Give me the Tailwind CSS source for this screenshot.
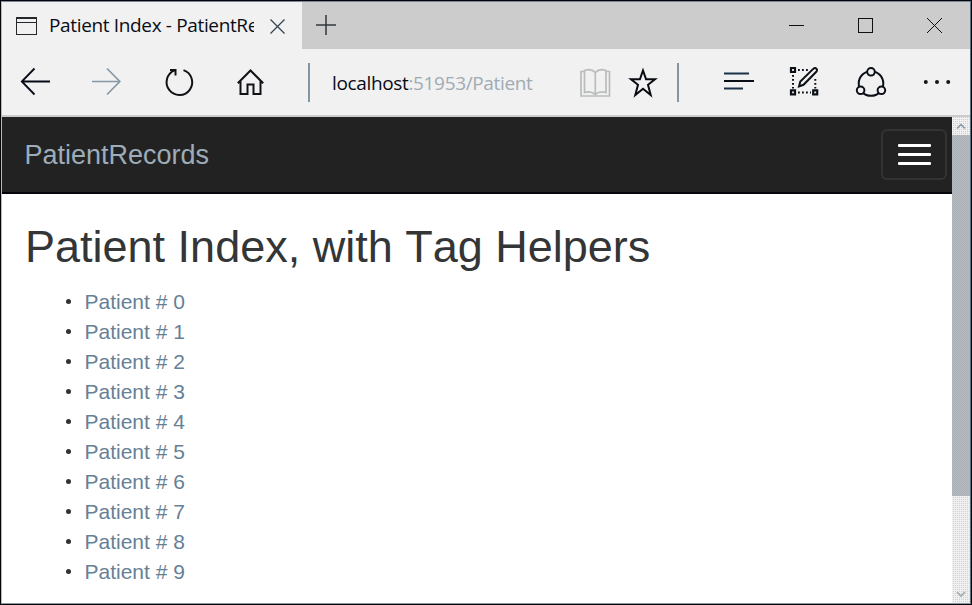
<!DOCTYPE html>
<html lang="en">
<head>
<meta charset="utf-8">
<title>Patient Index - PatientRecords</title>
<script src="https://cdn.jsdelivr.net/npm/@tailwindcss/browser@4"></script>
</head>
<body class="w-[972px] h-[605px] overflow-hidden bg-white font-['Liberation_Sans',Arial,sans-serif]">
<div class="h-[605px] w-[972px] border border-[#050508]">
<div class="flex h-[603px] w-[970px] flex-col border border-t-[#76889a] border-r-[#5b6c7d] border-b-[#8a97a2] border-l-[#b5bbc1]">
  <header class="flex h-[47px] shrink-0 bg-[#cccccc]">
    <div class="flex w-[300px] shrink-0 items-center bg-[#f1f1f1] pl-3.5">
      <svg class="h-[18px] w-[21px] shrink-0" viewBox="0 0 21 18" fill="none" stroke="#25282b" shape-rendering="crispEdges"><path d="M0 1H21" stroke-width="2"/><path d="M.5 0V17.5H20.5V0M0 5H21"/></svg>
      <div class="ml-3 w-[205px] overflow-hidden whitespace-nowrap pb-0.5 font-['Open_Sans',sans-serif] text-[19px] leading-7 tracking-[-0.35px] text-[#0a0d16]">Patient Index - PatientRecords</div>
      <svg class="ml-4 h-4 w-4 shrink-0" viewBox="0 0 16 16" fill="none" stroke="#34434f" stroke-width="1.3"><path d="M.5 1.5 14.5 15.5M14.5 1.5.5 15.5"/></svg>
    </div>
    <svg class="mt-[13px] ml-3.5 h-5 w-5" viewBox="0 0 20 20" fill="none" stroke="#33373a" stroke-width="1.5"><path d="M0 10H20M10 0V20"/></svg>
    <div class="mr-[27px] ml-auto flex items-center gap-[53px]">
      <svg class="h-4 w-4" viewBox="0 0 16 16" stroke="#101116" shape-rendering="crispEdges"><path d="M0 7.5H15"/></svg>
      <svg class="h-4 w-4" viewBox="0 0 16 16" fill="none" stroke="#101116" shape-rendering="crispEdges"><rect x=".5" y=".5" width="14" height="14"/></svg>
      <svg class="h-4 w-4" viewBox="0 0 16 16" stroke="#101116"><path d="M0 0 15 15M15 0 0 15"/></svg>
    </div>
  </header>

  <div class="flex h-[68px] shrink-0 items-center border-b-2 border-[#cbcbcb] bg-[#f1f1f1]">
    <svg class="ml-[18px] h-8 w-8 shrink-0" viewBox="20 66 32 32" fill="none" stroke="#070b18" stroke-width="1.8"><path d="M50 81.5H22M34.5 68.5 21.8 81.5 34.5 94.5"/></svg>
    <svg class="ml-10 h-8 w-8 shrink-0" viewBox="92 66 32 32" fill="none" stroke="#8799a6" stroke-width="1.7"><path d="M92 81.5H120M107 68.5 119.8 81.5 107 94.5"/></svg>
    <svg class="ml-10 h-8 w-8 shrink-0" viewBox="164 66 32 32" fill="none" stroke="#111216" stroke-width="2"><path d="M183.5 70.1A12.8 12.8 0 1 1 174.5 70.4M170 70H175.5V75.5"/></svg>
    <svg class="ml-10 h-8 w-8 shrink-0" viewBox="236 66 32 32" fill="none" stroke="#101218" stroke-width="2"><path d="M237.8 83.2 250.5 70.5 263.2 83.2M240.5 81V94H247.5V84.5H253.5V94H260.5V81"/></svg>
    <div class="ml-10 h-[39px] w-0.5 shrink-0 bg-[#8195a2]"></div>
    <div class="ml-[22px] w-[248px] shrink-0 whitespace-nowrap pt-0.5 font-['Open_Sans',sans-serif] text-[19px] leading-7 tracking-[-0.35px]"><span class="text-[#070b16]">localhost</span><span class="text-[#a0abb3]">:51953/Patient</span></div>
    <svg class="h-8 w-8 shrink-0" viewBox="580 66 32 32" fill="none" stroke="#b9bcbd" stroke-width="1.7"><path d="M584 71.5H581V96H609.5V71.5H606.5"/><path d="M595.3 72.5C592 69 588 69.3 584.5 70.5V92.5C588 91.5 592 91.5 595.3 94.5C598.5 91.5 603 91.5 606 92.5V70.5C602.5 69.3 598.5 69 595.3 72.5V94"/></svg>
    <svg class="ml-4 h-8 w-8 shrink-0" viewBox="628 66 32 32" fill="none" stroke="#080b12" stroke-width="2"><path d="M643 70.5 646.1 79.3H655L648 84.8 650.7 95 643 88.8 635.3 95 638 84.8 631 79.3H639.9Z"/></svg>
    <div class="ml-[17px] h-[39px] w-0.5 shrink-0 bg-[#8195a2]"></div>
    <svg class="ml-[45px] h-8 w-8 shrink-0" viewBox="724 66 32 32" fill="none" stroke="#080d18" stroke-width="2"><path d="M724 81H754"/><path d="M724 73.5H749M724 88.5H743" stroke="#193047"/></svg>
    <svg class="ml-8 h-8 w-8 shrink-0" viewBox="788 66 32 32" fill="none" stroke="#0c1017" stroke-width="2"><path d="M791 68H795V72H791ZM791 90.3H795V94.3H791ZM813.2 90.3H817.2V94.3H813.2Z" stroke-width="2.2"/><path d="M798 70H808M793 75V88.5M798 92.5H811M815.3 79V88.5" stroke-dasharray="1.8 2.2"/><path d="M799 86.5 800.3 81.5 813.2 68.9C815.6 66.8 818.4 69.5 816.3 71.7L803.5 84.8Z"/></svg>
    <svg class="ml-[35px] h-8 w-8 shrink-0" viewBox="855 66 32 32" fill="none" stroke="#0b0f16" stroke-width="2"><circle cx="871" cy="83.5" r="12.3"/><g fill="#f1f1f1"><circle cx="871" cy="71.8" r="3.8"/><circle cx="860.6" cy="90.3" r="3.8"/><circle cx="881.4" cy="90.3" r="3.8"/></g></svg>
    <svg class="ml-[35px] h-8 w-8 shrink-0" viewBox="922 66 32 32" fill="#12161b"><circle cx="925.8" cy="82" r="2"/><circle cx="937" cy="82" r="2"/><circle cx="948.2" cy="82" r="2"/></svg>
  </div>

  <div class="flex min-h-0 flex-1">
    <main class="min-w-0 flex-1 bg-white">
      <nav class="flex h-[77px] items-center justify-between border-b-2 border-[#05060c] bg-[#222222] pr-[5px] pl-[22.5px]">
        <a class="text-[27px] leading-[30px] text-[#9dacb8]">PatientRecords</a>
        <button class="flex h-[51px] w-[66px] flex-col items-center justify-center gap-1.5 rounded-md border-2 border-[#333333]">
          <span class="h-[3px] w-[33px] rounded-[1px] bg-white"></span><span class="h-[3px] w-[33px] rounded-[1px] bg-white"></span><span class="h-[3px] w-[33px] rounded-[1px] bg-white"></span>
        </button>
      </nav>
      <h2 class="mt-[28px] pl-[23px] text-[45px] leading-[50px] whitespace-nowrap text-[#333536] [font-kerning:none]">Patient Index, with Tag Helpers</h2>
      <ul class="mt-[15px] ml-[64px] text-[21px] leading-[30px] text-[#668096]">
        <li class="flex items-center gap-[13.5px]"><i class="mb-px h-[5px] w-[5px] rounded-full bg-[#303236]"></i><a>Patient # 0</a></li>
        <li class="flex items-center gap-[13.5px]"><i class="mb-px h-[5px] w-[5px] rounded-full bg-[#303236]"></i><a>Patient # 1</a></li>
        <li class="flex items-center gap-[13.5px]"><i class="mb-px h-[5px] w-[5px] rounded-full bg-[#303236]"></i><a>Patient # 2</a></li>
        <li class="flex items-center gap-[13.5px]"><i class="mb-px h-[5px] w-[5px] rounded-full bg-[#303236]"></i><a>Patient # 3</a></li>
        <li class="flex items-center gap-[13.5px]"><i class="mb-px h-[5px] w-[5px] rounded-full bg-[#303236]"></i><a>Patient # 4</a></li>
        <li class="flex items-center gap-[13.5px]"><i class="mb-px h-[5px] w-[5px] rounded-full bg-[#303236]"></i><a>Patient # 5</a></li>
        <li class="flex items-center gap-[13.5px]"><i class="mb-px h-[5px] w-[5px] rounded-full bg-[#303236]"></i><a>Patient # 6</a></li>
        <li class="flex items-center gap-[13.5px]"><i class="mb-px h-[5px] w-[5px] rounded-full bg-[#303236]"></i><a>Patient # 7</a></li>
        <li class="flex items-center gap-[13.5px]"><i class="mb-px h-[5px] w-[5px] rounded-full bg-[#303236]"></i><a>Patient # 8</a></li>
        <li class="flex items-center gap-[13.5px]"><i class="mb-px h-[5px] w-[5px] rounded-full bg-[#303236]"></i><a>Patient # 9</a></li>
      </ul>
    </main>
    <aside class="flex w-[18px] shrink-0 flex-col bg-[#e7e7e7] bg-[conic-gradient(#cfcfcf_25%,#f1f1f1_0)] bg-size-[2px_2px]">
      <svg class="h-[18px] w-[18px] shrink-0" viewBox="0 0 18 18" fill="none" stroke="#8295a4" stroke-width="1.5"><path d="M5 11.5 9 7.5 13 11.5"/></svg>
      <div class="h-[361px] bg-[#b0b6bb] bg-[conic-gradient(#a3afb8_25%,#bdbdbe_0_50%,#a3afb8_0_75%,#bdbdbe_0)] bg-size-[2px_2px]"></div>
      <svg class="mt-auto h-[18px] w-[18px] shrink-0" viewBox="0 0 18 18" fill="none" stroke="#a1acb4" stroke-width="1.7"><path d="M5 7 9 11 13 7"/></svg>
    </aside>
  </div>
</div>
</div>
</body>
</html>
